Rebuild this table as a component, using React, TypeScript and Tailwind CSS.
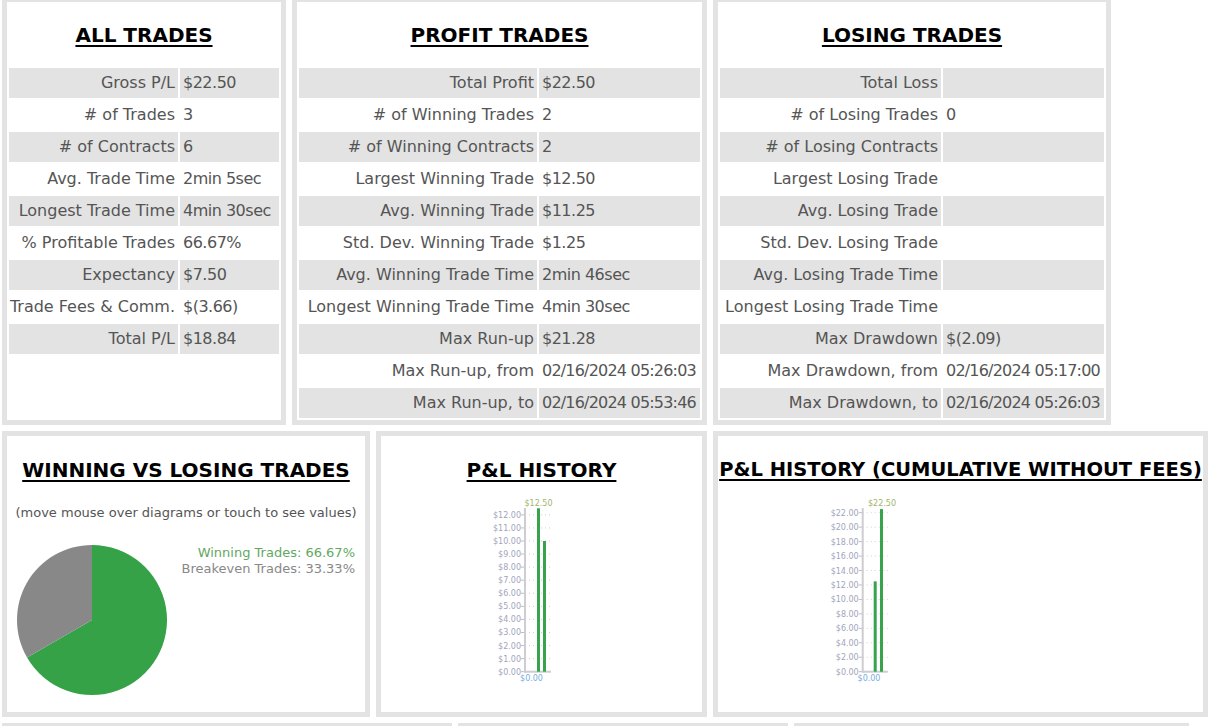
import React from 'react';

type Row = [string, string];

const allTrades: Row[] = [
  ['Gross P/L', '$22.50'],
  ['# of Trades', '3'],
  ['# of Contracts', '6'],
  ['Avg. Trade Time', '2min 5sec'],
  ['Longest Trade Time', '4min 30sec'],
  ['% Profitable Trades', '66.67%'],
  ['Expectancy', '$7.50'],
  ['Trade Fees & Comm.', '$(3.66)'],
  ['Total P/L', '$18.84'],
];

const profitTrades: Row[] = [
  ['Total Profit', '$22.50'],
  ['# of Winning Trades', '2'],
  ['# of Winning Contracts', '2'],
  ['Largest Winning Trade', '$12.50'],
  ['Avg. Winning Trade', '$11.25'],
  ['Std. Dev. Winning Trade', '$1.25'],
  ['Avg. Winning Trade Time', '2min 46sec'],
  ['Longest Winning Trade Time', '4min 30sec'],
  ['Max Run-up', '$21.28'],
  ['Max Run-up, from', '02/16/2024 05:26:03'],
  ['Max Run-up, to', '02/16/2024 05:53:46'],
];

const losingTrades: Row[] = [
  ['Total Loss', ''],
  ['# of Losing Trades', '0'],
  ['# of Losing Contracts', ''],
  ['Largest Losing Trade', ''],
  ['Avg. Losing Trade', ''],
  ['Std. Dev. Losing Trade', ''],
  ['Avg. Losing Trade Time', ''],
  ['Longest Losing Trade Time', ''],
  ['Max Drawdown', '$(2.09)'],
  ['Max Drawdown, from', '02/16/2024 05:17:00'],
  ['Max Drawdown, to', '02/16/2024 05:26:03'],
];

const Box = ({ className, children }: { className: string; children?: React.ReactNode }) => (
  <section className={`border-[5px] border-[#e3e3e3] bg-white ${className}`}>{children}</section>
);

const Heading = ({ children, className = '' }: { children: React.ReactNode; className?: string }) => (
  <h2
    className={`text-center font-bold text-black leading-[24px] underline decoration-2 underline-offset-[3px] whitespace-nowrap ${className}`}
  >
    {children}
  </h2>
);

const StatTable = ({ rows, cols }: { rows: Row[]; cols: string }) => (
  <div className={`grid ${cols} gap-[2px] p-[2px] text-[16px] leading-[30px] text-[#555]`}>
    {rows.map(([label, value], i) => {
      const bg = i % 2 === 0 ? 'bg-[#e3e3e3]' : 'bg-white';
      // dates are long, squeeze them a little so they stay inside the cell
      const track = value.includes('/') ? 'tracking-[-0.8px]' : 'tracking-[-0.5px]';
      return (
        <React.Fragment key={label}>
          <div className={`${bg} h-[30px] pr-[3px] text-right whitespace-nowrap`}>{label}</div>
          <div className={`${bg} h-[30px] pl-[3px] whitespace-nowrap ${track}`}>{value}</div>
        </React.Fragment>
      );
    })}
  </div>
);

type ChartProps = {
  axisX: number;
  gridEnd: number;
  max: number;
  step: number;
  perUnit: number;
  bars: { x: number; v: number }[];
  topLabel: string;
  topX: number;
  zeroX: number;
};

const BarChart = ({ axisX, gridEnd, max, step, perUnit, bars, topLabel, topX, zeroX }: ChartProps) => {
  const y0 = 181.7;
  const y = (v: number) => y0 - v * perUnit;
  const ticks: number[] = [];
  for (let v = 0; v <= max; v += step) ticks.push(v);
  return (
    <svg width="120" height="200" viewBox="0 0 120 200" fontFamily="'DejaVu Sans', sans-serif">
      {ticks.map((v) => (
        <g key={v}>
          <line x1={axisX} x2={gridEnd} y1={y(v)} y2={y(v)} stroke="#cfcfcf" strokeDasharray="1 3" />
          <line x1={axisX - 4} x2={axisX} y1={y(v)} y2={y(v)} stroke="#bdbdbd" />
          <text x={axisX - 4} y={y(v) + 3} fontSize="8" fill="#a2a5bd" textAnchor="end">
            ${v.toFixed(2)}
          </text>
        </g>
      ))}
      <line x1={axisX} x2={axisX} y1={18} y2={y0 + 1} stroke="#cdcdd2" strokeWidth="2" />
      <line x1={axisX} x2={gridEnd} y1={y0} y2={y0} stroke="#cdcdd2" strokeWidth="2" />
      {bars.map((b) => (
        <rect key={b.x} x={b.x} y={y(b.v)} width="3" height={y0 - y(b.v)} fill="#37a34a" />
      ))}
      <text x={topX} y={16} fontSize="8" fill="#9fb56b" textAnchor="middle">
        {topLabel}
      </text>
      <text x={zeroX} y={191} fontSize="8" fill="#78aee0" textAnchor="middle">
        $0.00
      </text>
    </svg>
  );
};

const App = () => {
  return (
    <div className="h-[726px] overflow-hidden bg-white font-['DejaVu_Sans',sans-serif]">
      <div className="-mt-[3px] pl-[2px]">
        {/* Stats tables */}
        <div className="flex items-stretch gap-[6px]">
          <Box className="w-[284px]">
            <Heading className="pt-[21px] text-[20px]">ALL TRADES</Heading>
            <div className="mt-[19px]">
              <StatTable rows={allTrades} cols="grid-cols-[169px_99px]" />
            </div>
          </Box>
          <Box className="w-[415px]">
            <Heading className="pt-[21px] text-[20px]">PROFIT TRADES</Heading>
            <div className="mt-[19px]">
              <StatTable rows={profitTrades} cols="grid-cols-[238px_161px]" />
            </div>
          </Box>
          <Box className="w-[398px]">
            <Heading className="pt-[21px] text-[20px]">LOSING TRADES</Heading>
            <div className="mt-[19px]">
              <StatTable rows={losingTrades} cols="grid-cols-[221px_161px]" />
            </div>
          </Box>
        </div>

        {/* Charts */}
        <div className="mt-[6px] flex gap-[6px]">
          <Box className="h-[286px] w-[368px]">
            <Heading className="pt-[22px] text-[20px]">WINNING VS LOSING TRADES</Heading>
            <p className="mt-[23px] text-center text-[13px] leading-[16px] text-[#555]">
              (move mouse over diagrams or touch to see values)
            </p>
            <div className="mt-[24px] flex">
              <svg width="150" height="150" viewBox="0 0 150 150" className="ml-[10px] shrink-0">
                <path d="M75 75 L75 0 A75 75 0 1 1 10.05 112.5 Z" fill="#35a248" />
                <path d="M75 75 L10.05 112.5 A75 75 0 0 1 75 0 Z" fill="#888888" />
              </svg>
              <div className="flex-1 pr-[10px] text-right text-[13px] leading-[16px]">
                <div className="text-[#62a862]">Winning Trades: 66.67%</div>
                <div className="text-[#888]">Breakeven Trades: 33.33%</div>
              </div>
            </div>
          </Box>
          <Box className="h-[286px] w-[331px]">
            <Heading className="pt-[22px] text-[20px]">P&amp;L HISTORY</Heading>
            <div className="ml-[99px] mt-[8px]">
              <BarChart
                axisX={45}
                gridEnd={71}
                max={12}
                step={1}
                perUnit={13.07}
                bars={[
                  { x: 57, v: 12.5 },
                  { x: 63, v: 10 },
                ]}
                topLabel="$12.50"
                topX={58.5}
                zeroX={51.5}
              />
            </div>
          </Box>
          <Box className="h-[286px] w-[495px]">
            <Heading className="pt-[22px] text-[19.5px]">P&amp;L HISTORY (CUMULATIVE WITHOUT FEES)</Heading>
            <div className="ml-[93px] mt-[8px]">
              <BarChart
                axisX={51.7}
                gridEnd={76.7}
                max={22}
                step={2}
                perUnit={7.227}
                bars={[
                  { x: 62.7, v: 12.5 },
                  { x: 69, v: 22.5 },
                ]}
                topLabel="$22.50"
                topX={71}
                zeroX={58}
              />
            </div>
          </Box>
        </div>

        {/* Next row, cut off by the viewport */}
        <div className="mt-[6px] flex gap-[6px]">
          <Box className="h-[200px] w-[450px]" />
          <Box className="h-[200px] w-[330px]" />
          <Box className="h-[200px] w-[395px]" />
        </div>
      </div>
    </div>
  );
};

export default App;
